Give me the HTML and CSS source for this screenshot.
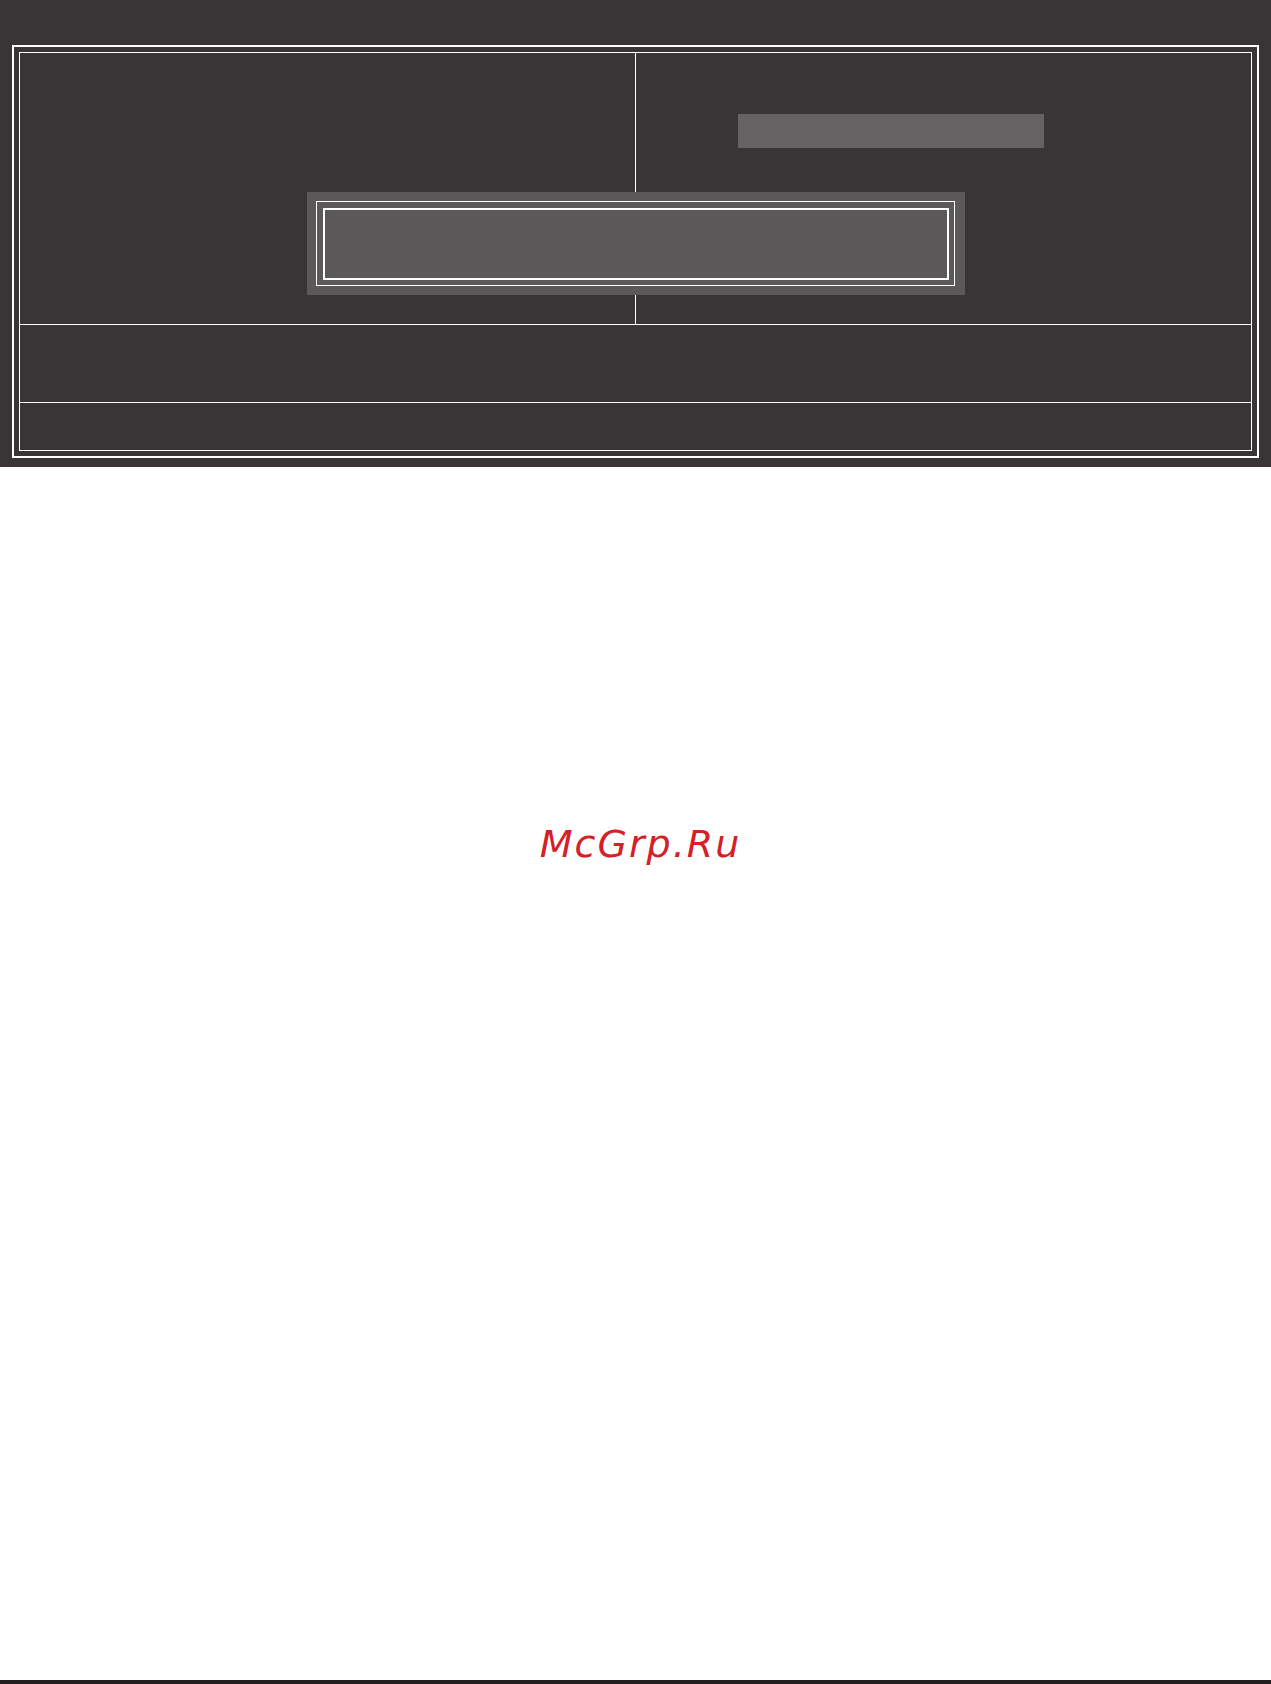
FILE: index.html
```html
<!DOCTYPE html>
<html>
<head>
<meta charset="utf-8">
<link rel="stylesheet" href="styles.css">
</head>
<body>
<div class="page">
  <div class="screen">
    <div class="frame-outer">
      <div class="frame-inner">
        <div class="row-top">
          <div class="pane-left"></div>
          <div class="pane-right">
            <div class="field"></div>
          </div>
        </div>
        <div class="row-mid"></div>
        <div class="row-bottom"></div>
        <div class="dialog">
          <div class="dialog-border">
            <div class="dialog-inner"></div>
          </div>
        </div>
      </div>
    </div>
  </div>
  <div class="watermark">McGrp.Ru</div>
  <div class="footer-bar"></div>
</div>
</body>
</html>
```
FILE: styles.css
```css
html, body {
  margin: 0;
  padding: 0;
  background: #ffffff;
}
.page {
  width: 1271px;
  height: 1684px;
  display: flex;
  flex-direction: column;
}
.screen {
  height: 467px;
  box-sizing: border-box;
  background: #393536;
  padding: 45px 12px 0 12px;
}
.frame-outer {
  box-sizing: border-box;
  height: 413px;
  border: 2px solid #ffffff;
  padding: 5px;
}
.frame-inner {
  position: relative;
  box-sizing: border-box;
  height: 100%;
  border: 1px solid #ffffff;
  display: flex;
  flex-direction: column;
}
.row-top {
  height: 271px;
  border-bottom: 1px solid #ffffff;
  display: flex;
}
.pane-left {
  width: 615px;
  border-right: 1px solid #ffffff;
}
.pane-right {
  flex: 1;
  padding: 61px 0 0 102px;
}
.field {
  width: 306px;
  height: 34px;
  background: #646263;
}
.row-mid {
  height: 77px;
  border-bottom: 1px solid #ffffff;
}
.row-bottom {
  flex: 1;
}
.dialog {
  position: absolute;
  left: 287px;
  top: 139px;
  width: 658px;
  height: 103px;
  box-sizing: border-box;
  background: #5a5859;
  padding: 9px 10px 9px 9px;
}
.dialog-border {
  box-sizing: border-box;
  height: 100%;
  border: 1px solid #ffffff;
  padding: 6px 5px 5px 6px;
}
.dialog-inner {
  box-sizing: border-box;
  height: 100%;
  border: 2px solid #ffffff;
}
.watermark {
  margin-top: 355px;
  text-align: center;
  font-family: "DejaVu Sans", sans-serif;
  font-style: italic;
  font-size: 38px;
  letter-spacing: 2px;
  line-height: 44px;
  color: #d42027;
  padding-left: 10px;
}
.footer-bar {
  margin-top: auto;
  height: 4px;
  background: #231f20;
}
```
